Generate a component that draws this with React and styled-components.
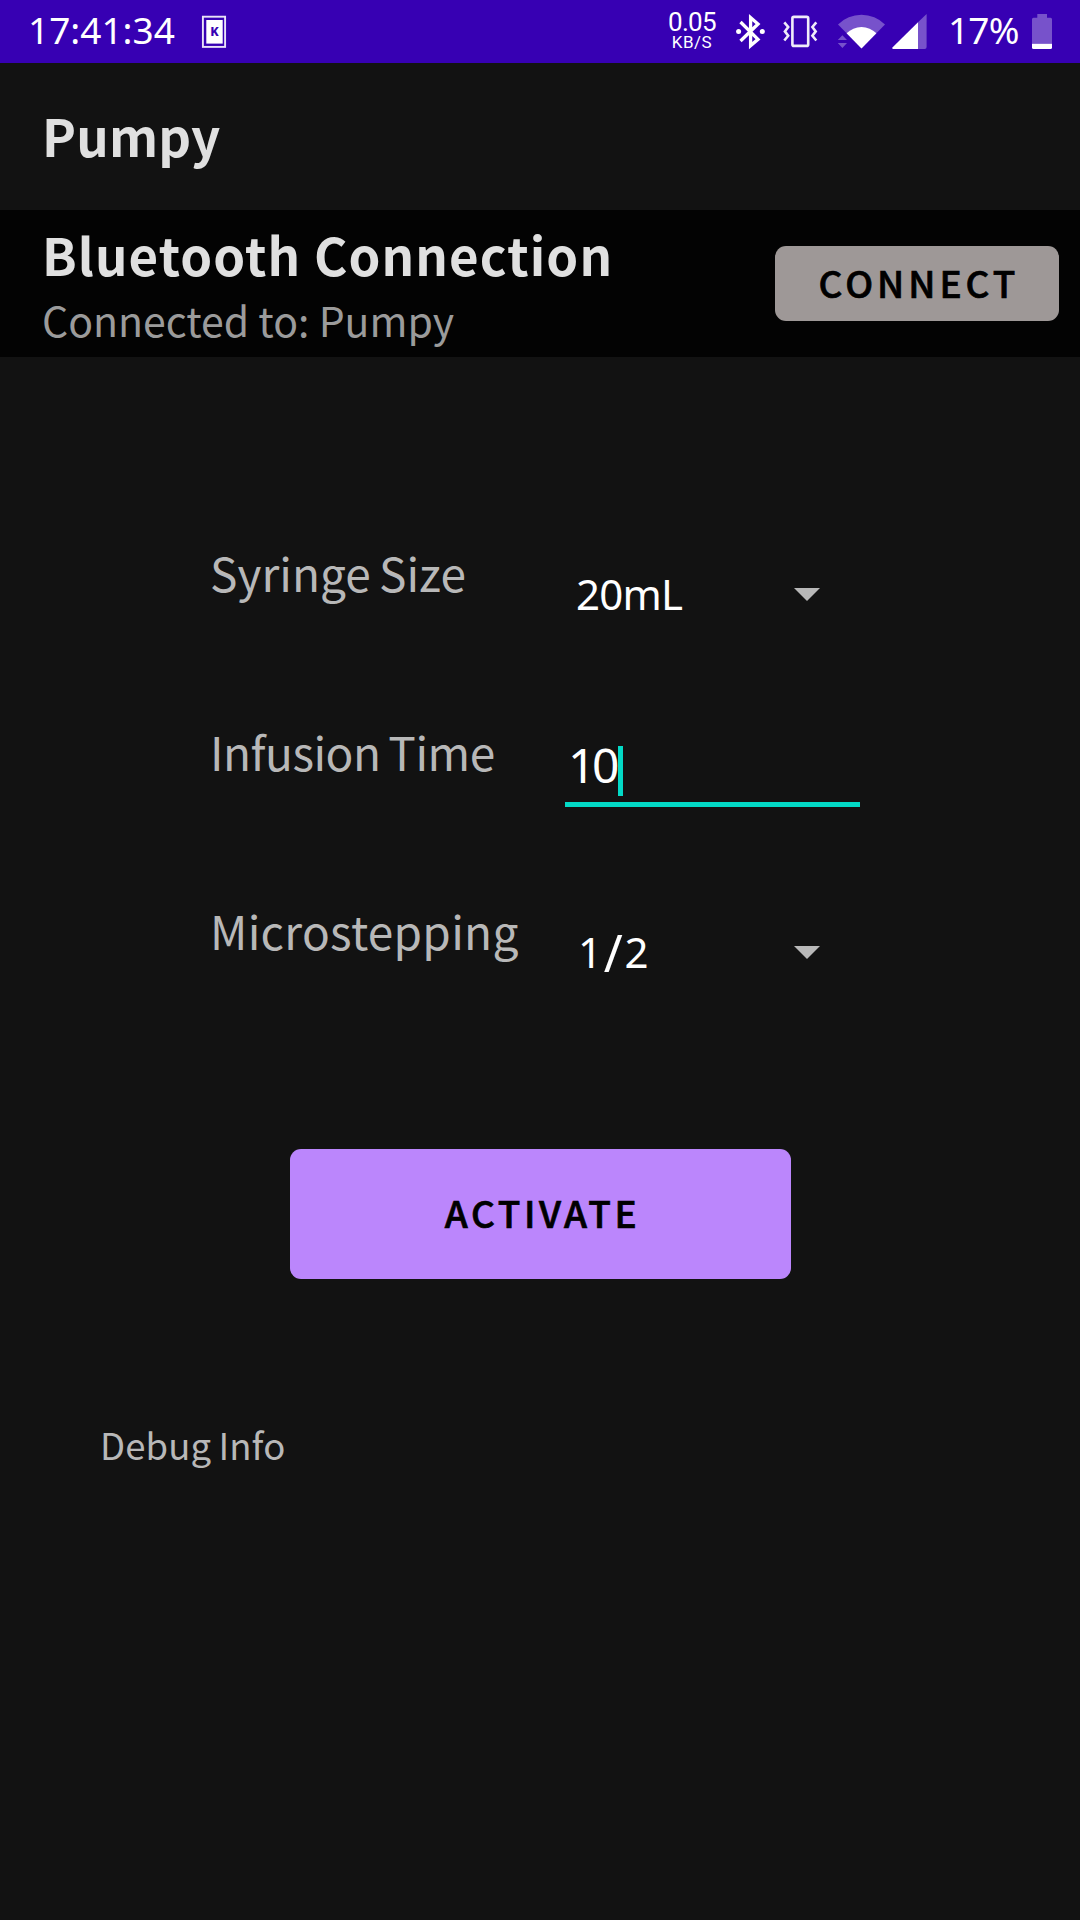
import React from 'react';
import styled, { createGlobalStyle } from 'styled-components';

const SANS = '"Noto Sans CJK SC", "Noto Sans", sans-serif';
const DIGITS = '"Noto Sans", "Open Sans", sans-serif';
const PURPLE = '#3700b3';
const TEAL = '#03dac6';

const GlobalStyle = createGlobalStyle`
  * { box-sizing: border-box; }
  html, body { margin: 0; background: #121212; }
  body { font-family: ${SANS}; overflow: hidden; }
`;

const Screen = styled.div`
  display: flex;
  flex-direction: column;
  width: 1080px;
  height: 1920px;
  background: #121212;
  white-space: nowrap;
`;

/* Status bar */
const StatusBar = styled.header`
  display: flex;
  flex: none;
  height: 63px;
  padding: 0 26px 0 28px;
  background: ${PURPLE};
  color: #fff;
`;

const StatusText = styled.span`
  font: 400 37px/59px ${DIGITS};
  letter-spacing: ${(p) => p.$tracking || 0}px;
`;

const Clock = styled(StatusText)`
  width: 170px;
`;

const Percent = styled(StatusText)`
  width: 98px;
  padding-left: 16px;
`;

const StatusIcons = styled.div`
  display: flex;
  margin-left: auto;
`;

const StatusGlyph = styled.svg`
  display: block;
  flex: none;
  height: 63px;
`;

const NetSpeed = styled.div`
  display: flex;
  flex-direction: column;
  align-items: center;
  width: 52px;
  margin-right: 12px;
  padding-top: 10px;
  font-family: Roboto, sans-serif;
`;

const SpeedValue = styled.span`
  font-size: 26px;
  line-height: 24px;
  letter-spacing: -0.7px;
`;

const SpeedUnit = styled.span`
  font-size: 17px;
  line-height: 16px;
  letter-spacing: 0.5px;
`;

/* App bar and connection panel */
const AppBar = styled.div`
  display: flex;
  flex: none;
  align-items: center;
  height: 147px;
  padding: 0 42px 4px;
`;

const Heading = styled.h1`
  margin: 0;
  color: #e0e0e0;
  font-size: 51px;
  font-weight: 700;
  line-height: 64px;
  letter-spacing: ${(p) => p.$tracking || 0}px;
`;

const Connection = styled.section`
  display: flex;
  flex: none;
  align-items: center;
  justify-content: space-between;
  height: 147px;
  padding: 0 21px 0 42px;
  background: #030303;
`;

const ConnectionText = styled.div`
  align-self: flex-start;
  padding-top: 12px;
`;

const ConnectionState = styled.p`
  margin: 0;
  color: #9b9b9b;
  font-size: 41px;
  line-height: 66px;
`;

const Button = styled.button`
  flex: none;
  width: ${(p) => p.$width}px;
  height: ${(p) => p.$height}px;
  border: 0;
  border-radius: 11px;
  padding: 0 0 4px 4px;
  background: ${(p) => p.$color};
  color: #000;
  font: 500 37px/54px ${SANS};
  letter-spacing: ${(p) => p.$tracking}px;
  -webkit-text-stroke: 0.7px #000;
`;

/* Form */
const Form = styled.main`
  display: flex;
  flex-direction: column;
  align-items: center;
  padding-top: 124px;
`;

const Row = styled.div`
  display: grid;
  grid-template-columns: 355px 295px;
  align-self: flex-start;
  height: 179px;
  margin-left: 210px;
`;

const Label = styled.label`
  align-self: center;
  padding-top: 2px;
  color: #b8b8b8;
  font-size: 46px;
  line-height: 68px;
  letter-spacing: ${(p) => p.$tracking}px;
  word-spacing: -2px;
`;

const Select = styled.div`
  display: flex;
  align-items: center;
  justify-content: space-between;
  padding: 46px 40px 0 ${(p) => p.$indent}px;
  color: #fff;
  font: 400 42px/58px ${DIGITS};
  letter-spacing: ${(p) => p.$tracking}px;
`;

const Slash = styled.span`
  font-size: 51px;
  line-height: 0;
  vertical-align: -4px;
`;

const Caret = styled.svg`
  display: block;
  width: 26px;
  height: 13px;
  margin-top: 2px;
  fill: #b8b8b8;
`;

const Input = styled.div`
  display: flex;
  align-items: flex-start;
  height: 65px;
  margin-top: 82px;
  border-bottom: 5px solid ${TEAL};
  padding-left: 3px;
`;

const InputValue = styled.span`
  width: 50px;
  color: #fff;
  font: 400 48px/46px ${DIGITS};
  letter-spacing: -3.5px;
`;

const Cursor = styled.span`
  width: 5px;
  height: 50px;
  margin-top: 4px;
  background: ${TEAL};
`;

const Activate = styled.div`
  display: flex;
  margin: 131px 0 138px 1px;
`;

const DebugInfo = styled.p`
  align-self: flex-start;
  margin: 0 0 0 100px;
  padding-top: 1px;
  color: #b8b8b8;
  font-size: 36.5px;
  line-height: 54px;
  letter-spacing: 0.1px;
  word-spacing: -1px;
`;

function KeyCardIcon() {
  return (
    <StatusGlyph width="32" viewBox="198 0 32 63">
      <rect x="202.9" y="16.7" width="22.2" height="30.2" fill="none" stroke="#e9e2f8" strokeWidth="1.9" />
      <rect x="206.3" y="20" width="16.4" height="23.6" fill="#fff" />
      <text x="214.4" y="35.8" textAnchor="middle" fontFamily="Noto Sans" fontWeight="800" fontSize="12.5" fill={PURPLE}>K</text>
    </StatusGlyph>
  );
}

function BluetoothIcon() {
  return (
    <StatusGlyph width="42" viewBox="730 0 42 63" fill="none" stroke="#fff" strokeWidth="3.3">
      <path d="M740.5 22 L758 39.3 L750.6 45.6 V17.6 L758 24 L740.5 41" />
      <circle cx="738.6" cy="31.4" r="2.5" fill="#fff" stroke="none" />
      <circle cx="762.3" cy="31.4" r="2.5" fill="#fff" stroke="none" />
    </StatusGlyph>
  );
}

function VibrateIcon() {
  return (
    <StatusGlyph width="56" viewBox="772 0 56 63" fill="none" stroke="#f0ebfa" strokeWidth="2.6">
      <rect x="792.4" y="16.9" width="15.8" height="29" rx="1.5" />
      <path d="M784.3 22.3 L788.2 27 L784.9 31.4 L788.2 35.8 L784.3 40.5" />
      <path d="M816.3 22.3 L812.4 27 L815.7 31.4 L812.4 35.8 L816.3 40.5" />
    </StatusGlyph>
  );
}

function WifiIcon() {
  return (
    <StatusGlyph width="60" viewBox="828 0 60 63" fill="#fff">
      <path d="M861.5 48.2 L838 24.5 A33.4 33.4 0 0 1 885 24.5 Z" opacity=".32" />
      <path d="M861.5 48.4 L846.6 33.2 A21.3 21.3 0 0 1 876.4 33.2 Z" />
      <path d="M842.4 35.2 L847 40 H837.8 Z M837.8 43 H847 L842.4 48 Z" opacity=".32" />
    </StatusGlyph>
  );
}

function SignalIcon() {
  return (
    <StatusGlyph width="44" viewBox="888 0 44 63" fill="#fff">
      <path d="M918 22.3 L926.6 14 V47 Q926.6 49 924.6 49 H918 Z" opacity=".32" />
      <path d="M918 22.3 V49 H893 Q891.6 48.6 892.4 47.6 Z" />
    </StatusGlyph>
  );
}

function BatteryIcon() {
  return (
    <StatusGlyph width="24" viewBox="1030 0 24 63" fill="#fff">
      <path d="M1037.3 14 H1047 V17.7 H1050.5 Q1052 17.7 1052 19.2 V43.8 H1032 V19.2 Q1032 17.7 1033.5 17.7 H1037.3 Z" opacity=".32" />
      <path d="M1032 43.8 H1052 V47.5 Q1052 49 1050.5 49 H1033.5 Q1032 49 1032 47.5 Z" />
    </StatusGlyph>
  );
}

function DropdownArrow() {
  return (
    <Caret viewBox="0 0 26 13">
      <path d="M0 0 H26 L13 13 Z" />
    </Caret>
  );
}

export default function App() {
  return (
    <Screen>
      <GlobalStyle />
      <StatusBar>
        <Clock>17:41:34</Clock>
        <KeyCardIcon />
        <StatusIcons>
          <NetSpeed>
            <SpeedValue>0.05</SpeedValue>
            <SpeedUnit>KB/S</SpeedUnit>
          </NetSpeed>
          <BluetoothIcon />
          <VibrateIcon />
          <WifiIcon />
          <SignalIcon />
          <Percent $tracking={-0.8}>17%</Percent>
          <BatteryIcon />
        </StatusIcons>
      </StatusBar>

      <AppBar>
        <Heading $tracking={0.2}>Pumpy</Heading>
      </AppBar>

      <Connection>
        <ConnectionText>
          <Heading as="h2" $tracking={1.1}>Bluetooth Connection</Heading>
          <ConnectionState>Connected to: Pumpy</ConnectionState>
        </ConnectionText>
        <Button $width={284} $height={75} $color="#9e9897" $tracking={4}>CONNECT</Button>
      </Connection>

      <Form>
        <Row>
          <Label $tracking={0}>Syringe Size</Label>
          <Select $indent={11} $tracking={-0.8}>
            20mL
            <DropdownArrow />
          </Select>
        </Row>
        <Row>
          <Label $tracking={-0.5}>Infusion Time</Label>
          <Input>
            <InputValue>10</InputValue>
            <Cursor />
          </Input>
        </Row>
        <Row>
          <Label $tracking={0.28}>Microstepping</Label>
          <Select $indent={13} $tracking={1.8}>
            <span>1<Slash>/</Slash>2</span>
            <DropdownArrow />
          </Select>
        </Row>
        <Activate>
          <Button $width={501} $height={130} $color="#bb86fc" $tracking={3.65}>ACTIVATE</Button>
        </Activate>
        <DebugInfo>Debug Info</DebugInfo>
      </Form>
    </Screen>
  );
}
